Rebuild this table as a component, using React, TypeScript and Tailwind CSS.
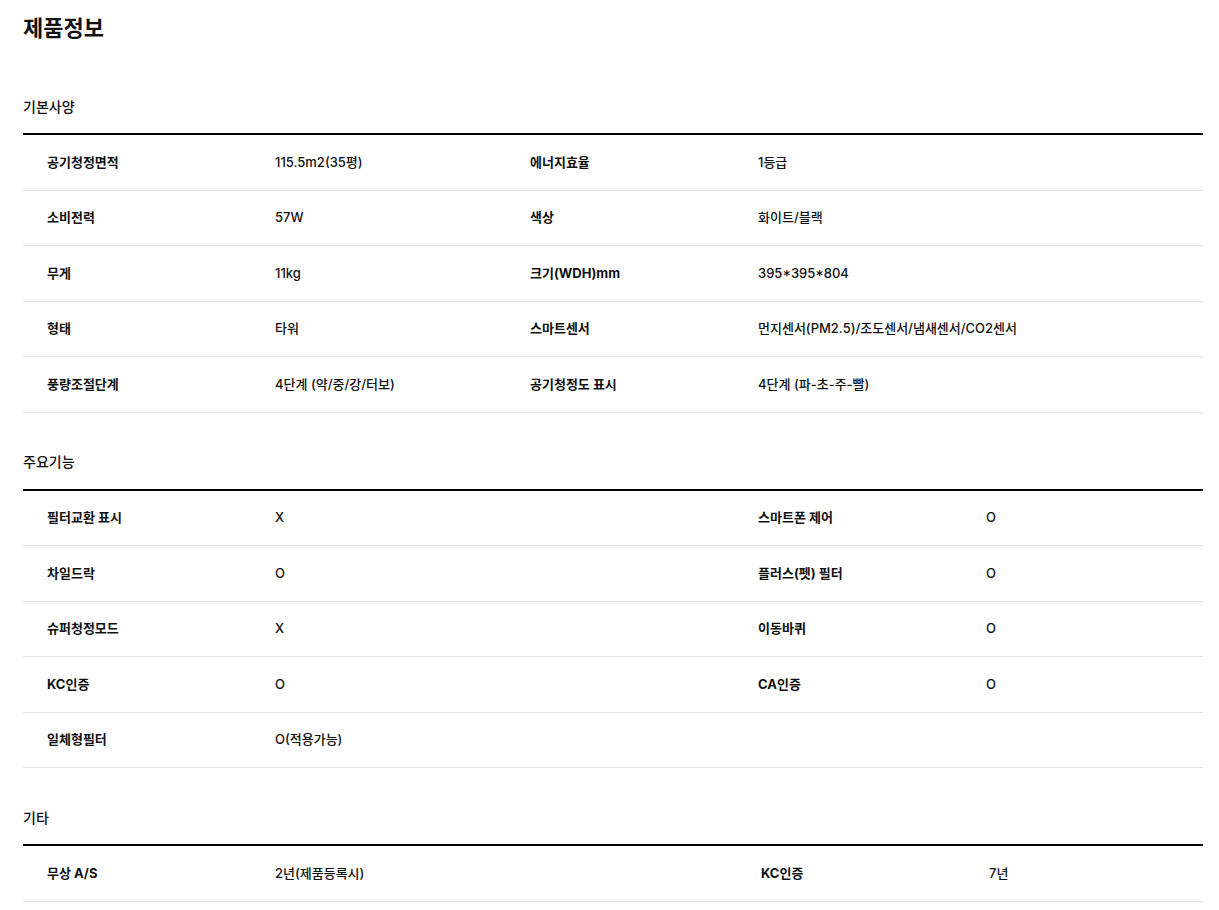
import React from "react";

type Row = [string, string, string?, string?];

const basic: Row[] = [
  ["공기청정면적", "115.5m2(35평)", "에너지효율", "1등급"],
  ["소비전력", "57W", "색상", "화이트/블랙"],
  ["무게", "11kg", "크기(WDH)mm", "395*395*804"],
  ["형태", "타워", "스마트센서", "먼지센서(PM2.5)/조도센서/냄새센서/CO2센서"],
  ["풍량조절단계", "4단계 (약/중/강/터보)", "공기청정도 표시", "4단계 (파-초-주-빨)"],
];

const features: Row[] = [
  ["필터교환 표시", "X", "스마트폰 제어", "O"],
  ["차일드락", "O", "플러스(펫) 필터", "O"],
  ["슈퍼청정모드", "X", "이동바퀴", "O"],
  ["KC인증", "O", "CA인증", "O"],
  ["일체형필터", "O(적용가능)"],
];

const etc: Row[] = [["무상 A/S", "2년(제품등록시)", "KC인증", "7년"]];

function Table({ rows, widths }: { rows: Row[]; widths: string[] }) {
  return (
    <div className="mt-[13px] border-t-2 border-black">
      {rows.map((r, i) => (
        <div key={i} className="flex h-[55.5px] items-center border-b border-[#e3e3e3]">
          <div className={`${widths[0]} pl-6 font-bold text-[#111]`}>{r[0]}</div>
          <div className={`${widths[1]} pl-6 font-medium text-[#111]`}>{r[1]}</div>
          <div className={`${widths[2]} pl-6 font-bold text-[#111]`}>{r[2] ?? ""}</div>
          <div className={`${widths[3]} pl-6 font-medium text-[#111]`}>{r[3] ?? ""}</div>
        </div>
      ))}
    </div>
  );
}

function Heading({ children }: { children: React.ReactNode }) {
  return (
    <div className="mt-[35px] flex h-[28px] items-center text-[14px] font-medium text-[#111]">{children}</div>
  );
}

export default function App() {
  return (
    <div
      className="min-h-screen bg-white px-[23px] text-[13px] text-[#111]"
      style={{ fontFamily: 'Inter, "Noto Sans CJK KR", sans-serif' }}
    >
      <div className="w-[1180px]">
        <div className="flex h-[57px] items-center text-[22px] font-bold">제품정보</div>
        <Heading>기본사양</Heading>
        <Table rows={basic} widths={["w-[228px]", "w-[255px]", "w-[228px]", "w-[469px]"]} />
        <Heading>주요기능</Heading>
        <Table rows={features} widths={["w-[228px]", "w-[483px]", "w-[228px]", "w-[241px]"]} />
        <Heading>기타</Heading>
        <Table rows={etc} widths={["w-[228px]", "w-[486px]", "w-[228px]", "w-[238px]"]} />
      </div>
    </div>
  );
}
